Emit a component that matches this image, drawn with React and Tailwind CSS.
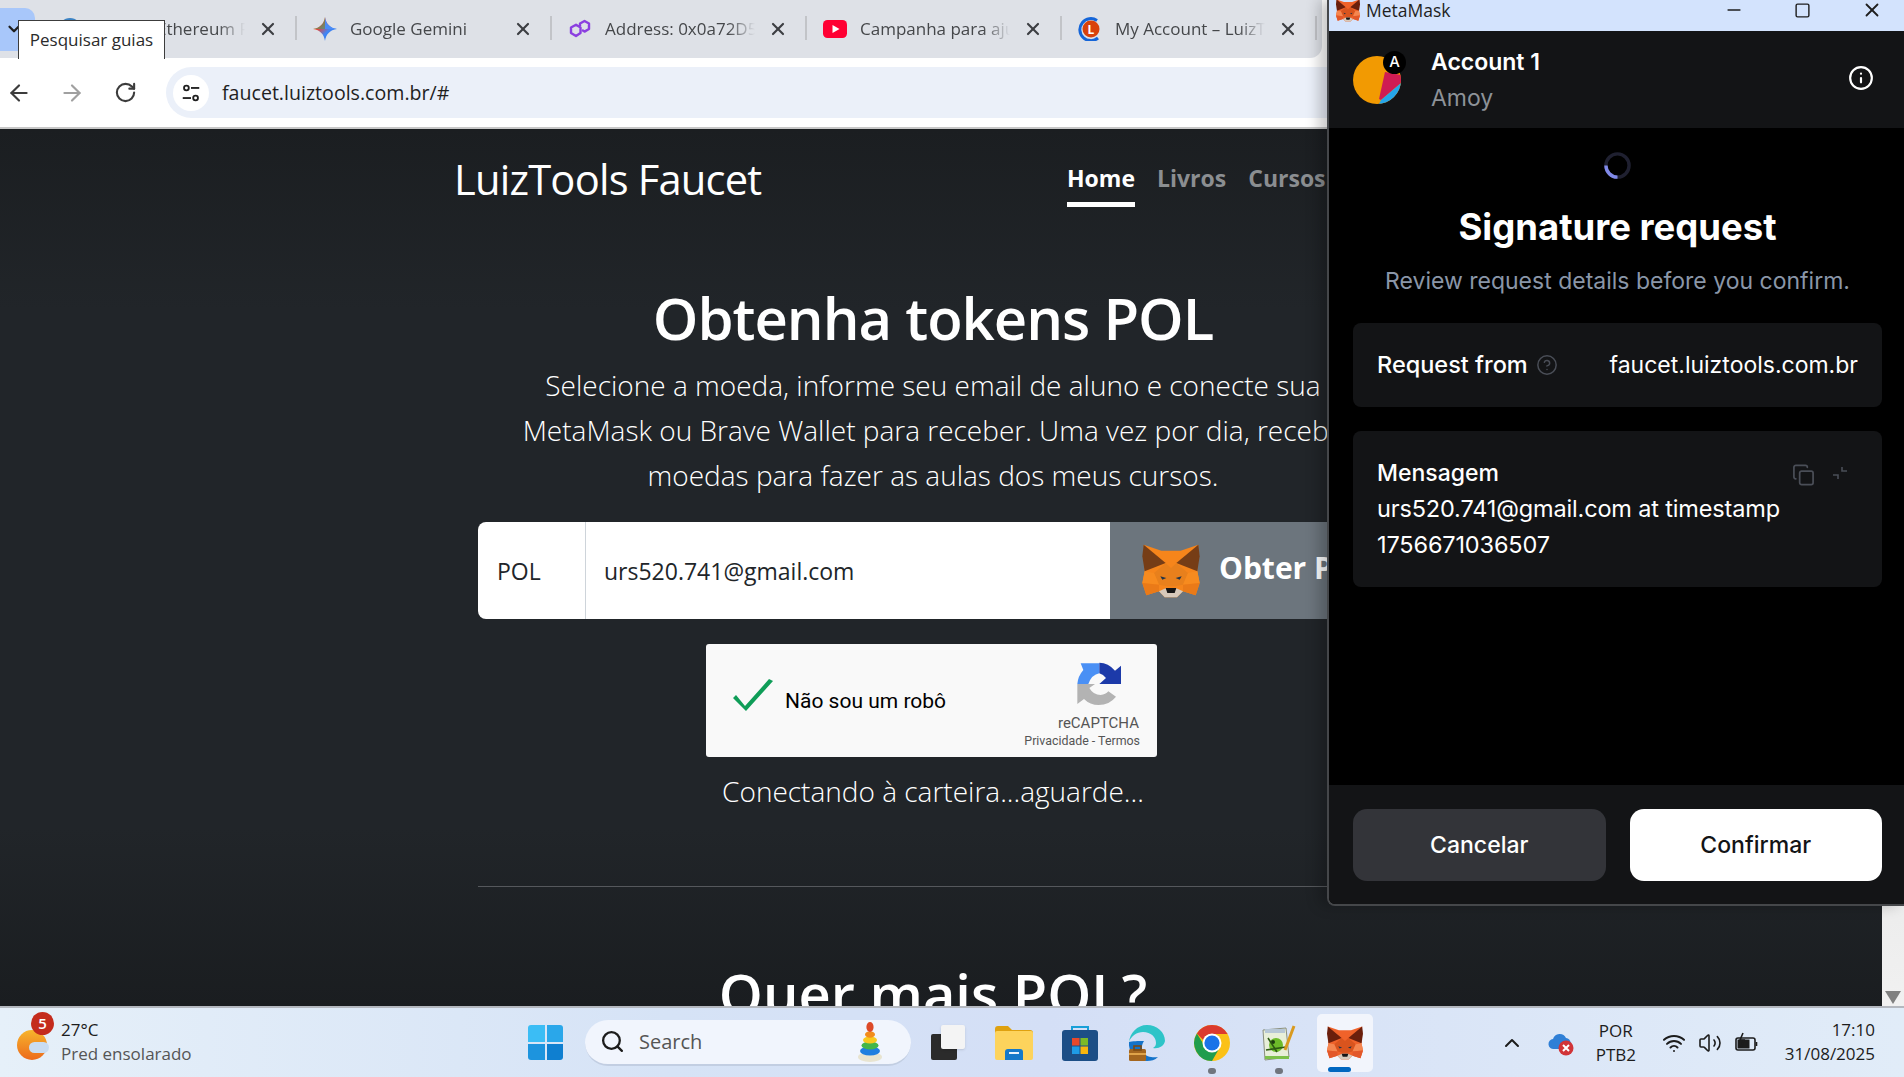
import { ArrowLeft, ArrowRight, RotateCw, X, Search, ChevronUp, Wifi, Volume2, Info, CircleHelp, Copy, Minus, Square, ChevronDown } from "lucide-react";

const ui = "font-['Open_Sans',sans-serif]";

function Fox({ className, bright }) {
  const ear = bright ? "#6b1f0c" : "#763d16";
  const main = bright ? "#f0622a" : "#f6851b";
  const center = bright ? "#d9541e" : "#e8801c";
  const cheek = bright ? "#f58650" : "#f78b1f";
  const low = bright ? "#e2582a" : "#ea7a18";
  return (
    <svg viewBox="68 38 172 162" className={className}>
      <polygon points="72,40 125,58 183,58 236,40 233,120 240,155 228,192 190,180 172,198 135,198 118,180 80,192 68,155 75,120" fill={main} />
      <polygon points="72,40 138,95 75,120 68,75" fill={ear} />
      <polygon points="236,40 170,95 233,120 240,75" fill={ear} />
      <polygon points="138,95 154,110 170,95 205,125 190,160 165,165 143,165 118,160 103,125" fill={center} />
      <polygon points="75,120 103,125 118,160 68,155" fill={cheek} />
      <polygon points="233,120 205,125 190,160 240,155" fill={cheek} />
      <polygon points="68,155 118,160 118,180 80,192" fill={low} />
      <polygon points="240,155 190,160 190,180 228,192" fill={low} />
      <polygon points="122,135 140,140 128,145" fill="#233447" />
      <polygon points="186,135 168,140 180,145" fill="#233447" />
      <polygon points="118,180 140,170 168,170 190,180 172,198 135,198" fill="#d7c9bb" />
      <polygon points="138,170 170,170 165,185 143,185" fill="#161616" />
    </svg>
  );
}

function TuneIcon() {
  return (
    <svg viewBox="0 0 24 24" className="w-[22px] h-[22px]" fill="none" stroke="#1f1f1f" strokeWidth="2">
      <circle cx="7" cy="6.5" r="2.6" />
      <path d="M12 6.5h9" />
      <circle cx="17" cy="17.5" r="2.6" />
      <path d="M3 17.5h9" />
    </svg>
  );
}

function GeminiIcon() {
  return (
    <svg viewBox="0 0 24 24" className="w-[24px] h-[24px]">
      <defs>
        <linearGradient id="gem" x1="0" y1="0" x2="1" y2="1">
          <stop offset="0" stopColor="#f9ab00" />
          <stop offset="0.35" stopColor="#ea4335" />
          <stop offset="0.6" stopColor="#4285f4" />
          <stop offset="1" stopColor="#1a73e8" />
        </linearGradient>
      </defs>
      <path d="M12 0c.8 6.4 5 11.2 12 12-7 .8-11.2 5.6-12 12-.8-6.4-5-11.2-12-12 7-.8 11.2-5.6 12-12z" fill="url(#gem)" />
      <path d="M12 0c.8 6.4 5 11.2 12 12H12z" fill="#4c8df6" />
      <path d="M0 12c7-.8 11.2-5.6 12-12v12z" fill="#3aa76d" opacity="0.55" />
    </svg>
  );
}

function PolygonIcon() {
  return (
    <svg viewBox="0 0 24 24" className="w-[24px] h-[24px]" fill="none" stroke="#8b3fe0" strokeWidth="2.4" strokeLinejoin="round">
      <path d="M3 10.5l5-2.8 4.5 2.8v5.5L8 19l-5-3z" />
      <path d="M12 9V6.5L16.5 4 21 6.5V12l-4.5 2.6L14 13" />
    </svg>
  );
}

function YoutubeIcon() {
  return (
    <svg viewBox="0 0 24 18" className="w-[24px] h-[18px]">
      <rect width="24" height="18" rx="4.5" fill="#ff0033" />
      <polygon points="9.5,5 16.5,9 9.5,13" fill="#fff" />
    </svg>
  );
}

function LuizIcon() {
  return (
    <svg viewBox="0 0 24 24" className="w-[24px] h-[24px]">
      <path d="M19 3.5A11 11 0 1 0 20 21" fill="none" stroke="#1565d8" strokeWidth="3" />
      <circle cx="13" cy="12" r="8.5" fill="#d9420b" />
      <text x="13" y="16.5" fontSize="12" fontWeight="700" fill="#fff" textAnchor="middle" fontFamily="Open Sans">L</text>
    </svg>
  );
}

function Tab({ icon, title }) {
  return (
    <div className="w-[255px] h-full flex items-center pl-[16px] shrink-0 relative">
      <div className="w-[24px] flex justify-center shrink-0">{icon}</div>
      <div className="ml-[13px] w-[150px] overflow-hidden whitespace-nowrap text-[17px] text-[#45474a] [mask-image:linear-gradient(to_right,black_82%,transparent)]">
        {title}
      </div>
      <X className="w-[20px] h-[20px] ml-[13px] text-[#3c3e42]" strokeWidth={2.6} />
      <div className="absolute right-0 top-[16px] h-[24px] w-[2px] bg-[#c2c4c8]" />
    </div>
  );
}

function BrowserChrome() {
  return (
    <div className={`${ui} shrink-0`}>
      <div className="h-[58px] flex items-center bg-[#dee1e7] w-[1322px] rounded-br-[12px] overflow-hidden">
        <div className="w-[35px] h-[43px] bg-[#a8c7fa] rounded-r-[10px] flex items-center pl-[5px] shrink-0">
          <ChevronDown className="w-[18px] h-[18px] text-[#1f1f1f]" strokeWidth={3} />
        </div>
        <div className="ml-[7px] flex h-full">
          <Tab
            title="Sepolia Ethereum Faucet"
            icon={<div className="w-[22px] h-[22px] rounded-full border-[3px] border-[#3b82c4]" />}
          />
          <Tab title="Google Gemini" icon={<GeminiIcon />} />
          <Tab title="Address: 0x0a72D5e8b1c" icon={<PolygonIcon />} />
          <Tab title="Campanha para ajudar" icon={<YoutubeIcon />} />
          <Tab title="My Account – LuizTools" icon={<LuizIcon />} />
        </div>
      </div>
      <div className="h-[71px] bg-white flex items-center border-b-2 border-[#c7c7c7]">
        <ArrowLeft className="ml-[6px] w-[26px] h-[26px] text-[#3c3c3c]" strokeWidth={2} />
        <ArrowRight className="ml-[27px] w-[26px] h-[26px] text-[#a0a0a0]" strokeWidth={2} />
        <RotateCw className="ml-[29px] w-[23px] h-[23px] text-[#3c3c3c]" strokeWidth={2.2} />
        <div className="ml-[29px] flex-1 h-[51px] bg-[#ebf0f9] rounded-l-full flex items-center pl-[7px]">
          <div className="w-[36px] h-[36px] bg-white rounded-full flex items-center justify-center">
            <TuneIcon />
          </div>
          <span className="ml-[13px] text-[19.6px] text-[#1f1f1f]">faucet.luiztools.com.br/#</span>
        </div>
      </div>
    </div>
  );
}

function RecaptchaLogo() {
  return (
    <svg viewBox="48 34 138 132" className="w-[46px] h-[44px]">
      <path d="M62 38H118V68Q95 72 85 100H52Q54 76 70 58Z" fill="#4a90f5" />
      <path d="M118 36Q145 36 165 60L183 45V100H118L138 82Q130 72 118 68Z" fill="#1c3aa9" />
      <path d="M52 100H105L88 112Q100 133 122 133Q137 132 145 122L168 138Q148 163 116 163Q90 163 72 145L52 160Z" fill="#b3b3b3" />
    </svg>
  );
}

function Page() {
  return (
    <div className={`${ui} flex-1 flex min-h-0`}>
      <div className="flex-1 overflow-hidden bg-[linear-gradient(to_bottom,#1b1e21,#212529_180px,#212529_700px,#1a1d20)] text-white">
        <header className="h-[103px] ml-[454px] flex items-center">
          <div className="w-[613px] text-[41.7px] font-medium tracking-[-0.8px] mb-[2px]">LuizTools Faucet</div>
          <nav className="flex gap-[22px] text-[23px] leading-[32px] font-bold text-[#8b8e91] mt-[7px]">
            <a className="text-white border-b-[5px] border-white pb-[8px]">Home</a>
            <a className="border-b-[5px] border-transparent pb-[8px]">Livros</a>
            <a className="border-b-[5px] border-transparent pb-[8px]">Cursos</a>
          </nav>
        </header>
        <main className="w-[910px] ml-[478px] text-center">
          <h1 className="mt-[50px] text-[58px] leading-[72px] font-semibold tracking-[-1px] whitespace-nowrap">Obtenha tokens POL</h1>
          <p className="mt-[9px] text-[28px] leading-[45px] font-light whitespace-nowrap">
            Selecione a moeda, informe seu email de aluno e conecte sua
            <br />
            MetaMask ou Brave Wallet para receber. Uma vez por dia, receba
            <br />
            moedas para fazer as aulas dos meus cursos.
          </p>
          <div className="mt-[24px] h-[97px] flex rounded-lg overflow-hidden text-left">
            <div className="w-[108px] bg-white border-r border-[#ced4da] text-[#212529] text-[23px] flex items-center pl-[19px] pt-[2px]">POL</div>
            <div className="w-[524px] bg-white text-[#212529] text-[23px] flex items-center pl-[18px] pt-[2px]">urs520.741@gmail.com</div>
            <div className="flex-1 bg-[#6c757d] flex items-center pl-[32px] whitespace-nowrap">
              <Fox className="w-[58px] h-[54px]" />
              <span className="ml-[19px] text-[30px] font-bold mt-[-6px]">Obter POL</span>
            </div>
          </div>
          <div className="mt-[25px] ml-[228px] w-[451px] h-[113px] bg-[#f9f9f9] rounded-[3px] flex text-left font-['Roboto',sans-serif]">
            <svg viewBox="0 0 42 32" className="ml-[26px] mt-[35px] w-[42px] h-[32px]">
              <path d="M1 19l3-3 9 11L37 0l4 2-27 30z" fill="#0f9d58" />
            </svg>
            <span className="ml-[11px] mt-[44px] text-[21px] leading-[26px] text-black">Não sou um robô</span>
            <div className="ml-auto pr-[17px] flex flex-col items-end text-[#555]">
              <div className="mt-[18px] mr-[18px] h-[45px]"><RecaptchaLogo /></div>
              <div className="mt-[7px] mr-[1px] text-[15px] leading-[18px]">reCAPTCHA</div>
              <div className="text-[12.4px] leading-[18px]">Privacidade - Termos</div>
            </div>
          </div>
          <div className="mt-[12px] text-[28px] leading-[45px] font-light">Conectando à carteira...aguarde...</div>
          <hr className="mt-[72px] border-[#55585c]" />
          <h2 className="mt-[75px] text-[56px] leading-[62px] font-semibold">Quer mais POL?</h2>
        </main>
      </div>
      <div className="w-[22px] bg-[linear-gradient(to_bottom,#c9c9c9,#f1f1f1)] flex flex-col justify-end items-center pb-[2px]">
        <div className="w-0 h-0 border-x-[8px] border-x-transparent border-t-[13px] border-t-[#808080]" />
      </div>
    </div>
  );
}

function MetaMaskWindow() {
  return (
    <div className="absolute left-[1327px] top-0 w-[577px] h-[906px] flex flex-col bg-black border-l-2 border-b-2 border-[#45474a] rounded-bl-lg overflow-hidden shadow-[-8px_0_14px_rgba(0,0,0,0.22)] font-['Inter',sans-serif]">
      <div className="h-[31px] shrink-0 bg-[#d3e3fd] flex items-center text-[#1f1f1f] pr-[21px]">
        <Fox className="ml-[7px] w-[24px] h-[23px] mt-[-11px] shrink-0" bright />
        <span className={`${ui} ml-[6px] text-[17.5px] mt-[-10px]`}>MetaMask</span>
        <Minus className="ml-auto w-[20px] h-[20px] mt-[-11px]" strokeWidth={2} />
        <Square className="ml-[50px] w-[17px] h-[17px] mt-[-11px]" strokeWidth={2} />
        <X className="ml-[50px] w-[22px] h-[22px] mt-[-11px]" strokeWidth={2} />
      </div>
      <div className="h-[97px] shrink-0 bg-[#131416] flex items-center pl-[24px] pr-[30px] text-white relative">
        <div className="relative w-[48px] h-[48px] shrink-0">
          <svg viewBox="0 0 48 48" className="w-[48px] h-[48px]">
            <defs>
              <clipPath id="av"><circle cx="24" cy="24" r="24" /></clipPath>
            </defs>
            <g clipPath="url(#av)">
              <rect width="48" height="48" fill="#f29a02" />
              <polygon points="32,16 48,19 48,27 28,44 26,43" fill="#cf1c53" />
              <polygon points="48,27 48,48 26,48 28,44" fill="#25a6ea" />
            </g>
          </svg>
          <div className="absolute left-[30px] top-[-5px] w-[23px] h-[23px] rounded-full bg-black flex items-center justify-center text-[15px] font-medium">A</div>
        </div>
        <div className="ml-[30px] flex flex-col">
          <span className="text-[23px] leading-[36px] font-semibold">Account 1</span>
          <span className="text-[23px] leading-[36px] text-[#8d9298]">Amoy</span>
        </div>
        <Info className="ml-auto w-[26px] h-[26px] mt-[-3px]" strokeWidth={2} />
      </div>
      <div className="flex-1 flex flex-col pl-[24px] pr-[22px]">
        <svg viewBox="0 0 28 28" className="w-[27px] h-[27px] mx-auto mt-[24px]">
          <circle cx="14" cy="14" r="12" fill="none" stroke="#1f2030" strokeWidth="3.5" />
          <path d="M2 14a12 12 0 0 0 12 12" fill="none" stroke="#8089e8" strokeWidth="3.5" />
        </svg>
        <h1 className="mt-[26px] text-center text-[36.5px] leading-[44px] font-bold text-white">Signature request</h1>
        <p className="mt-[14px] text-center text-[23px] leading-[36px] text-[#8a96a8]">Review request details before you confirm.</p>
        <div className="mt-[24px] h-[84px] rounded-lg bg-[#131416] flex items-center px-[24px] text-white text-[23px]">
          <span className="font-medium text-[23.5px]">Request from</span>
          <CircleHelp className="ml-[8px] w-[22px] h-[22px] text-[#4a4e57]" strokeWidth={1.6} />
          <span className="ml-auto">faucet.luiztools.com.br</span>
        </div>
        <div className="mt-[24px] h-[156px] rounded-lg bg-[#131416] px-[24px] pt-[24px] text-white text-[23.5px] leading-[36px] relative">
          <div className="font-medium text-[23px]">Mensagem</div>
          <div className="tracking-[-0.15px]">urs520.741@gmail.com at timestamp</div>
          <div className="tracking-[-0.15px]">1756671036507</div>
          <Copy className="absolute left-[439px] top-[32px] w-[23px] h-[24px] text-[#4a4e57]" strokeWidth={1.8} />
          <svg viewBox="0 0 16 16" className="absolute left-[479px] top-[34px] w-[16px] h-[16px]" fill="none" stroke="#4a4e57" strokeWidth="1.6">
            <path d="M10 2v4h5M1 10h5v4" />
          </svg>
        </div>
      </div>
      <div className="h-[119px] shrink-0 bg-[#131416] flex gap-[24px] pl-[24px] pr-[22px] pt-[24px] text-[23px] font-medium">
        <button className="flex-1 h-[72px] rounded-[14px] bg-[#333439] text-white">Cancelar</button>
        <button className="flex-1 h-[72px] rounded-[14px] bg-white text-[#131416]">Confirmar</button>
      </div>
    </div>
  );
}

function ChromeLogo() {
  return (
    <svg viewBox="0 0 36 36" className="w-[36px] h-[36px]">
      <circle cx="18" cy="18" r="18" fill="#fbc116" />
      <path d="M18 0a18 18 0 0 1 15.6 9H18a9 9 0 0 0-8.6 6.3L2.9 8.5A18 18 0 0 1 18 0z" fill="#db3a2e" />
      <path d="M2.9 8.5A18 18 0 0 0 18 36l7.8-13.5a9 9 0 0 1-15.7-2.5z" fill="#1f9d4d" />
      <circle cx="18" cy="18" r="9.5" fill="#fff" />
      <circle cx="18" cy="18" r="7.6" fill="#1a73e8" />
    </svg>
  );
}

function EdgeLogo() {
  return (
    <svg viewBox="0 0 36 36" className="w-[36px] h-[36px] ml-[4px]">
      <path d="M18 0C8 0 1 8 0 17c2-6 8-10 14-10 8 0 13 5 13 11 0 2-1 4-3 5 6 1 11-2 12-7C36 7 28 0 18 0z" fill="#2ec4c8" />
      <path d="M0 17c-1 9 6 19 18 19 4 0 8-1 11-4-5 1-12 0-15-5-2-4-1-8 1-11-6 0-12 0-15 1z" fill="#1573c9" />
      <rect x="0" y="24" width="17" height="12" rx="1.5" fill="#a4661f" />
      <rect x="0" y="28" width="17" height="2" fill="#e0a44a" />
      <rect x="5" y="21" width="7" height="4" fill="none" stroke="#7a4a14" strokeWidth="1.6" />
    </svg>
  );
}

function StoreLogo() {
  return (
    <svg viewBox="0 0 36 36" className="w-[36px] h-[36px] ml-[2px]">
      <path d="M10 5V2h16v3" fill="none" stroke="#19a0d8" strokeWidth="2" />
      <rect y="5" width="36" height="31" rx="3" fill="#1c4e86" />
      <rect x="10" y="13" width="7.5" height="7.5" fill="#e8482c" />
      <rect x="18.5" y="13" width="7.5" height="7.5" fill="#7cb928" />
      <rect x="10" y="21.5" width="7.5" height="7.5" fill="#1f9be6" />
      <rect x="18.5" y="21.5" width="7.5" height="7.5" fill="#f8b50e" />
    </svg>
  );
}

function FolderLogo() {
  return (
    <svg viewBox="0 0 38 34" className="w-[38px] h-[34px] ml-[4px]">
      <path d="M0 3a3 3 0 0 1 3-3h10l4 4h18a3 3 0 0 1 3 3v3H0z" fill="#dfa10f" />
      <rect y="5" width="38" height="29" rx="2" fill="#fdd35c" />
      <path d="M10 34v-8a3 3 0 0 1 3-3h12a3 3 0 0 1 3 3v8z" fill="#1479c9" />
      <rect x="14" y="26" width="10" height="2" fill="#e8f3fb" />
    </svg>
  );
}

function NotepadLogo() {
  return (
    <svg viewBox="0 0 36 36" className="w-[36px] h-[36px]">
      <polygon points="2,5 25,3 28,32 4,35" fill="#e8efd9" stroke="#8a8f7e" strokeWidth="1" />
      <rect x="4" y="4" width="20" height="4" fill="#b7c7d6" />
      <circle cx="15" cy="20" r="7" fill="#6dbb2a" />
      <circle cx="12" cy="17" r="2" fill="#1d3d0f" />
      <path d="M5 25l20-3M7 13l9 14" stroke="#2d5a14" strokeWidth="1.6" />
      <path d="M33 1L24 25" stroke="#d99a1f" strokeWidth="3" />
      <rect x="4" y="31" width="24" height="3" fill="#7cc04a" />
    </svg>
  );
}

function ToyIcon() {
  return (
    <svg viewBox="0 0 26 40" className="w-[26px] h-[40px]">
      <ellipse cx="13" cy="35" rx="12" ry="5" fill="#e8e4d0" />
      <ellipse cx="13" cy="29" rx="10" ry="4.5" fill="#1f7fe0" />
      <ellipse cx="13" cy="23.5" rx="8.5" ry="4" fill="#43b649" />
      <ellipse cx="13" cy="18" rx="7" ry="3.6" fill="#f8c91f" />
      <ellipse cx="13" cy="12.5" rx="5" ry="3.2" fill="#f28c1c" />
      <ellipse cx="13" cy="5" rx="3.6" ry="5" fill="#dd4a28" />
    </svg>
  );
}

function TaskIcon({ children, dot }) {
  return (
    <div className="w-[66.7px] h-full flex items-center justify-center relative shrink-0">
      {children}
      {dot && <div className="absolute top-[60px] w-[8px] h-[6px] rounded-full bg-[#70757e]" />}
    </div>
  );
}

function Taskbar() {
  return (
    <div className={`${ui} h-[71px] shrink-0 border-t-2 border-[#b4b8bf] bg-[linear-gradient(to_right,#e6f0f9,#d6e3f6_35%,#d4dff6_55%,#e1ecf8)] flex items-center text-[#1c1c1c] relative`}>
      <div className="w-[528px] h-full flex items-center shrink-0">
        <div className="ml-[17px] w-[36px] h-[36px] relative mt-[6px] shrink-0">
          <div className="absolute left-0 top-[2px] w-[30px] h-[30px] rounded-full bg-[linear-gradient(to_bottom,#f7b52c,#ec6a1c)]" />
          <div className="absolute left-[12px] top-[14px] w-[20px] h-[11px] rounded-full bg-[#c9dcf2]" />
          <div className="absolute left-[14px] top-[-16px] w-[23px] h-[23px] rounded-full bg-[#c42b1c] text-white text-[15px] font-semibold flex items-center justify-center">5</div>
        </div>
        <div className="ml-[8px] mt-[-2px] flex flex-col text-[17px] leading-[24px]">
          <span>27°C</span>
          <span className="text-[#555]">Pred ensolarado</span>
        </div>
      </div>
      <div className="w-[35px] h-[35px] grid grid-cols-2 gap-[2px] shrink-0">
        <div className="bg-[#3bbdf5] rounded-tl-[3px]" />
        <div className="bg-[#2aa7ea] rounded-tr-[3px]" />
        <div className="bg-[#1d94de] rounded-bl-[3px]" />
        <div className="bg-[#0f7fd0] rounded-br-[3px]" />
      </div>
      <div className="ml-[22px] w-[326px] h-[46px] rounded-full bg-[#f1f5fd] border-b-2 border-[#c2cee2] flex items-center pl-[15px] shrink-0">
        <Search className="w-[25px] h-[25px] text-[#1c1c1c]" strokeWidth={2.2} />
        <span className="ml-[14px] text-[20px] text-[#555]">Search</span>
        <div className="ml-auto mr-[28px]"><ToyIcon /></div>
      </div>
      <div className="ml-[1px] flex h-full shrink-0">
        <TaskIcon>
          <div className="relative w-[34px] h-[35px] ml-[6px]">
            <div className="absolute left-0 bottom-0 w-[26px] h-[26px] bg-[#2b2b2b] rounded-[2px]" />
            <div className="absolute right-0 top-0 w-[24px] h-[24px] bg-[#f4f4f4] rounded-[2px] shadow-sm" />
          </div>
        </TaskIcon>
        <TaskIcon><FolderLogo /></TaskIcon>
        <TaskIcon><StoreLogo /></TaskIcon>
        <TaskIcon><EdgeLogo /></TaskIcon>
        <TaskIcon dot><ChromeLogo /></TaskIcon>
        <TaskIcon dot><NotepadLogo /></TaskIcon>
        <TaskIcon>
          <div className="absolute left-[5px] top-[6px] w-[56px] h-[58px] rounded-[5px] bg-[#f2f5fc]" />
          <Fox className="relative w-[36px] h-[36px]" bright />
          <div className="absolute left-[16px] top-[59px] w-[23px] h-[5px] rounded-full bg-[#0067c0]" />
        </TaskIcon>
      </div>
      <div className="ml-[121px] flex items-center shrink-0">
        <ChevronUp className="w-[24px] h-[24px]" strokeWidth={2} />
        <svg viewBox="0 0 26 26" className="ml-[24px] w-[26px] h-[26px]">
          <path d="M6 19a5 5 0 0 1-1-10 7 7 0 0 1 13-1 6 6 0 0 1 2 11z" fill="#2f7fd6" />
          <circle cx="18" cy="18" r="7.5" fill="#d13438" />
          <path d="M15 15l6 6M21 15l-6 6" stroke="#fff" strokeWidth="2" />
        </svg>
        <div className="ml-[14px] w-[56px] text-center text-[17px] leading-[24px]">
          POR
          <br />
          PTB2
        </div>
        <Wifi className="ml-[18px] w-[24px] h-[24px]" strokeWidth={2} />
        <Volume2 className="ml-[12px] w-[24px] h-[24px]" strokeWidth={1.6} />
        <svg viewBox="0 0 24 24" className="ml-[12px] w-[24px] h-[24px]" fill="none" stroke="#1c1c1c" strokeWidth="1.6">
          <rect x="2" y="7" width="19" height="12" rx="2" />
          <path d="M22.5 11v4" />
          <rect x="3.5" y="8.5" width="12" height="9" fill="#1c1c1c" stroke="none" />
          <path d="M9 2L6 9h4l-3 7" stroke="#1c1c1c" />
        </svg>
      </div>
      <div className="flex-1 mt-[-2px] text-right pr-[29px] text-[17px] leading-[24px]">
        17:10
        <br />
        31/08/2025
      </div>
    </div>
  );
}

export default function App() {
  return (
    <div className="relative w-[1904px] h-[1077px] overflow-hidden flex flex-col bg-white">
      <BrowserChrome />
      <Page />
      <Taskbar />
      <div className={`${ui} absolute left-[18px] top-[20px] w-[147px] h-[39px] bg-white border border-b-0 border-[#3c3c3c] flex items-center justify-center text-[17px] text-[#2b2b2b]`}>
        Pesquisar guias
      </div>
      <MetaMaskWindow />
    </div>
  );
}
